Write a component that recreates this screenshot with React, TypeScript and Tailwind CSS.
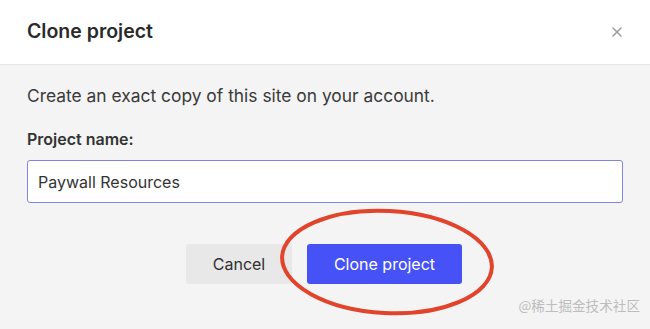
import { X } from "lucide-react";

const App = () => {
  return (
    <div className="relative w-[650px] h-[329px] overflow-hidden bg-[#f4f4f4] font-['Inter',sans-serif]">
      <div className="h-[65px] bg-white border-b border-[#e6e6e6] flex items-center justify-between pl-[27px] pr-[25px]">
        <h2 className="text-[19.5px] font-semibold text-[#2a2a2a]">Clone project</h2>
        <X className="w-[16px] h-[16px] text-[#9a9a9a]" strokeWidth={2.2} />
      </div>

      <div className="px-[27px] pt-[19px]">
        <p className="text-[17.4px] leading-[24px] text-[#3a3a3a]">
          Create an exact copy of this site on your account.
        </p>
        <label className="block mt-[20px] text-[16px] leading-[22px] font-semibold text-[#333]">
          Project name:
        </label>
        <div className="mt-[10px] w-[596px] h-[43px] bg-white border border-[#7f86e2] rounded-[3px] flex items-center pl-[10px] text-[16px] text-[#333]">
          Paywall Resources
        </div>
        <div className="mt-[41px] flex gap-[15px] ml-[159px]">
          <button className="w-[106px] h-[40px] rounded-[3px] bg-[#e8e8e8] text-[16px] text-[#2f2f2f]">
            Cancel
          </button>
          <button className="w-[155px] h-[40px] rounded-[3px] bg-[#4652f6] text-[16px] text-white">
            Clone project
          </button>
        </div>
      </div>

      <svg className="absolute left-0 top-0 pointer-events-none" width="650" height="329">
        <ellipse cx="387" cy="262" rx="105" ry="51" fill="none" stroke="#e2432b" strokeWidth="4" transform="rotate(3 387 262)" />
      </svg>

      <span className="absolute right-[10px] bottom-[14px] text-[13.6px] text-[#bdbdbd] font-['Noto_Sans_CJK_SC',sans-serif]">
        @稀土掘金技术社区
      </span>
    </div>
  );
};

export default App;
